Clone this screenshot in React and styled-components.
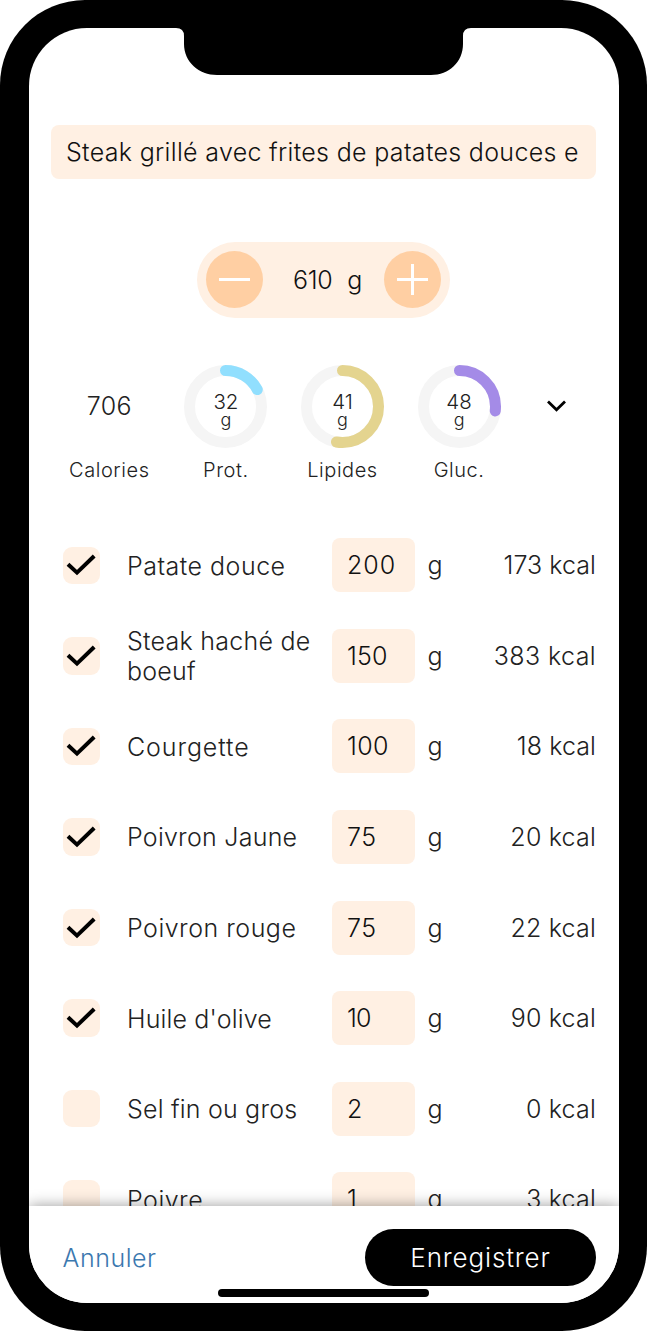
import React, { useState } from 'react';
import styled, { createGlobalStyle } from 'styled-components';

const GlobalStyle = createGlobalStyle`
    *{
        box-sizing: border-box;
    }
    body{
        margin: 0;
        background: #fff;
    }
    button, input{
        font: inherit;
        color: inherit;
        border: none;
        outline: none;
        padding: 0;
        margin: 0;
    }
`;

const Phone = styled.div`
    position: relative;
    width: 647px;
    height: 1331px;
    padding: 28px 28px 28px 28.5px;
    border-radius: 85px;
    background: #000;
    font-family: Inter, 'Liberation Sans', sans-serif;
    font-weight: 300;
    font-size: 25px;
    color: #222;
`;

const Screen = styled.div`
    display: flex;
    flex-direction: column;
    height: 1275px;
    border-radius: 58px;
    overflow: hidden;
    background: #fff;
`;

const Notch = styled.svg`
    position: absolute;
    top: 27px;
    left: 175px;
`;

const Content = styled.main`
    flex: 1;
    min-height: 0;
    overflow: hidden;
    padding: 96.5px 23px 0 22.5px;
`;

const TitleInput = styled.input`
    display: block;
    width: 545px;
    height: 54px;
    padding: 1px 15px 0;
    border-radius: 8px;
    background: #fff0e3;
    color: #111;
    letter-spacing: 0.32px;
`;

const Stepper = styled.div`
    display: flex;
    align-items: center;
    justify-content: space-between;
    width: 253px;
    height: 75.5px;
    margin: 63.5px auto 0;
    padding: 0 9px;
    border-radius: 38px;
    background: #fff0e3;
    color: #111;
`;

const RoundButton = styled.button`
    display: flex;
    align-items: center;
    justify-content: center;
    width: 57px;
    height: 57px;
    border-radius: 50%;
    background: #ffcfa3;
`;

const Total = styled.div`
    display: flex;
    gap: 15px;
    padding: 1px 0 0 8px;
    letter-spacing: -0.4px;
`;

const Nutrients = styled.section`
    display: flex;
    margin-top: 47px;
`;

const Nutrient = styled.div`
    display: flex;
    flex-direction: column;
    align-items: center;
    width: 116.6px;
    font-size: 20px;
    letter-spacing: 0.55px;
`;

const Gauge = styled.div`
    display: grid;
    place-items: center;
    width: 83px;
    height: 83px;
    margin-bottom: 10px;
    svg, div{
        grid-area: 1 / 1;
    }
`;

const Amount = styled.div`
    font-size: 20.5px;
    line-height: 18px;
    letter-spacing: 0;
    text-align: center;
    padding-top: 9px;
    small{
        display: block;
        font-size: 18px;
    }
`;

const Calories = styled.div`
    font-size: 25px;
    letter-spacing: 0.4px;
`;

const Toggle = styled.button`
    display: flex;
    justify-content: center;
    align-items: center;
    width: 78px;
    height: 82px;
    background: none;
`;

const List = styled.ul`
    list-style: none;
    margin: 38.5px 0 0;
    padding: 0;
`;

const Item = styled.li`
    display: grid;
    grid-template-columns: 64.5px 205px 83px 50px 1fr;
    align-items: center;
    height: 90.57px;
    padding-left: 11.5px;
`;

const Check = styled.button`
    display: flex;
    align-items: center;
    justify-content: center;
    width: 37.5px;
    height: 37.5px;
    border-radius: 9px;
    background: #fff0e3;
`;

const Name = styled.span`
    width: 200px;
    padding-top: 1px;
    line-height: 30px;
    letter-spacing: ${({ $spacing }) => $spacing}px;
`;

const Quantity = styled.input`
    width: 83px;
    height: 54px;
    padding: 0 15px;
    border-radius: 8px;
    background: #fff0e3;
    color: #111;
    letter-spacing: ${({ $spacing }) => $spacing}px;
`;

const Unit = styled.span`
    padding-left: 12.5px;
`;

const Energy = styled.span`
    text-align: right;
    white-space: nowrap;
    letter-spacing: ${({ $spacing }) => $spacing}px;
`;

const Footer = styled.footer`
    position: relative;
    flex: none;
    height: 97px;
    background: #fff;
    box-shadow: 0 0 14px rgba(0, 0, 0, 0.4);
`;

const Actions = styled.div`
    display: flex;
    align-items: center;
    justify-content: space-between;
    padding: 23px 23px 3px 34px;
`;

const Cancel = styled.button`
    background: none;
    color: #3b78af;
    letter-spacing: 0.55px;
`;

const Save = styled.button`
    width: 231px;
    height: 57px;
    border-radius: 29px;
    background: #000;
    color: #fff;
    font-size: 26px;
    letter-spacing: 0.85px;
`;

const HomeBar = styled.div`
    width: 211px;
    height: 8px;
    margin: 0 auto;
    border-radius: 4px;
    background: #000;
`;

const nutrients = [
    { name: 'Prot.', value: 32, part: 0.172, color: '#91dffe' },
    { name: 'Lipides', value: 41, part: 0.527, color: '#e4d48f' },
    { name: 'Gluc.', value: 48, part: 0.27, color: '#a48be7' },
];

// spacing: letter spacing of the name, the quantity and the energy
const ingredients = [
    { name: 'Patate douce', grams: 200, kcal: 173, checked: true, spacing: [0.5, 1, 0.05] },
    { name: 'Steak haché de boeuf', grams: 150, kcal: 383, checked: true, spacing: [0.25, 0.2, 0.4] },
    { name: 'Courgette', grams: 100, kcal: 18, checked: true, spacing: [0.9, 0.4, 0.1] },
    { name: 'Poivron Jaune', grams: 75, kcal: 20, checked: true, spacing: [0.25, 0.5, 0.2] },
    { name: 'Poivron rouge', grams: 75, kcal: 22, checked: true, spacing: [0.5, 0.5, 0.2] },
    { name: "Huile d'olive", grams: 10, kcal: 90, checked: true, spacing: [0.15, -0.8, 0.2] },
    { name: 'Sel fin ou gros', grams: 2, kcal: 0, checked: false, spacing: [0.2, 0, 0.2] },
    { name: 'Poivre', grams: 1, kcal: 3, checked: false, spacing: [0.5, 0, 0.2] },
];

const Ring = ({ part, color }) => (
    <svg width="83" height="83" viewBox="0 0 83 83" fill="none" strokeWidth="11">
        <circle cx="41.5" cy="41.5" r="36" stroke="#f5f5f5" />
        <circle
            cx="41.5"
            cy="41.5"
            r="36"
            stroke={color}
            strokeLinecap="round"
            pathLength="1"
            strokeDasharray={`${part} 1`}
            transform="rotate(-90 41.5 41.5)"
        />
    </svg>
);

const Ingredient = ({ data }) => {
    const [checked, setChecked] = useState(data.checked);
    const [nameSpacing, gramsSpacing, kcalSpacing] = data.spacing;
    return (
        <Item>
            <Check onClick={() => setChecked(!checked)}>
                {checked && (
                    <svg width="30" height="22" viewBox="0 0 30 22" fill="none" stroke="#000" strokeWidth="4">
                        <path d="M2 10.2 L11 18.6 L28.2 2" />
                    </svg>
                )}
            </Check>
            <Name $spacing={nameSpacing}>{data.name}</Name>
            <Quantity defaultValue={data.grams} $spacing={gramsSpacing} />
            <Unit>g</Unit>
            <Energy $spacing={kcalSpacing}>{data.kcal} kcal</Energy>
        </Item>
    );
};

const App = () => (
    <>
        <GlobalStyle />
        <Phone>
            <Screen>
                <Content>
                    <TitleInput defaultValue="Steak grillé avec frites de patates douces e" />
                    <Stepper>
                        <RoundButton>
                            <svg width="31" height="31" stroke="#fff" strokeWidth="3">
                                <path d="M0 15.5 H31" />
                            </svg>
                        </RoundButton>
                        <Total>
                            <span>610</span>
                            <span>g</span>
                        </Total>
                        <RoundButton>
                            <svg width="31" height="31" stroke="#fff" strokeWidth="3">
                                <path d="M0 15.5 H31 M15.5 0 V31" />
                            </svg>
                        </RoundButton>
                    </Stepper>
                    <Nutrients>
                        <Nutrient>
                            <Gauge>
                                <Calories>706</Calories>
                            </Gauge>
                            Calories
                        </Nutrient>
                        {nutrients.map((n) => (
                            <Nutrient key={n.name}>
                                <Gauge>
                                    <Ring part={n.part} color={n.color} />
                                    <Amount>
                                        {n.value}
                                        <small>g</small>
                                    </Amount>
                                </Gauge>
                                {n.name}
                            </Nutrient>
                        ))}
                        <Toggle>
                            <svg width="19" height="12" viewBox="0 0 19 12" fill="none" stroke="#000" strokeWidth="2.8">
                                <path d="M1 1.5 L9.5 9.7 L18 1.5" />
                            </svg>
                        </Toggle>
                    </Nutrients>
                    <List>
                        {ingredients.map((item) => (
                            <Ingredient key={item.name} data={item} />
                        ))}
                    </List>
                </Content>
                <Footer>
                    <Actions>
                        <Cancel>Annuler</Cancel>
                        <Save>Enregistrer</Save>
                    </Actions>
                    <HomeBar />
                </Footer>
            </Screen>
            <Notch width="298" height="49" viewBox="0 0 298 49">
                <path d="M0 0 H298 V1 H296 Q288 1 288 9 V17 C288 35 274 48 256 48 H42 C24 48 9 35 9 17 V9 Q9 1 1 1 H0 Z" />
            </Notch>
        </Phone>
    </>
);

export default App;
